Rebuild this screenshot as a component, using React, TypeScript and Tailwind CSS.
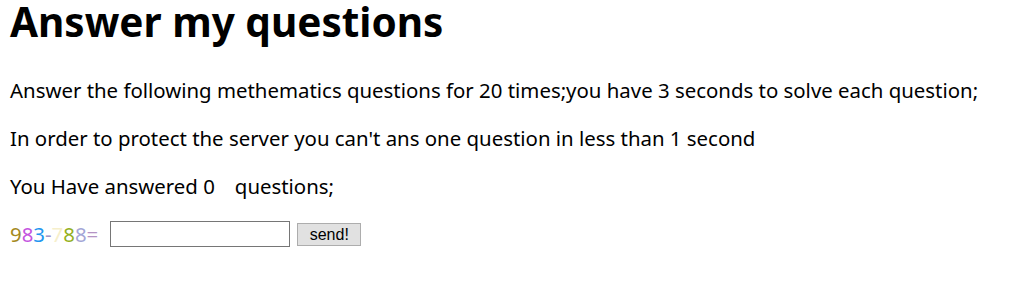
export default function App() {
  const digits: Array<[string, string]> = [
    ['9', 'text-[#a58a1e]'],
    ['8', 'text-[#c455e0]'],
    ['3', 'text-[#2396f0]'],
    ['-', 'text-[#a397c8]'],
    ['7', 'text-[#f6efcb]'],
    ['8', 'text-[#94b01c]'],
    ['8', 'text-[#a4a6d6]'],
    ['=', 'text-[#b493c4]'],
  ]

  return (
    <div className="min-h-screen bg-white pl-[10px] pr-[8px] pt-[2px] font-['Noto_Sans',sans-serif] text-[20.4px] text-black">
      <h1 className="text-[40.5px] font-bold leading-[40px]">Answer my questions</h1>
      <p className="mt-[34px] leading-[28px]">
        Answer the following methematics questions for 20 times;you have 3 seconds to solve each question;
      </p>
      <p className="mt-[20px] leading-[28px]">
        In order to protect the server you can't ans one question in less than 1 second
      </p>
      <p className="mt-[20px] leading-[28px]">
        You Have answered <span>0</span>
        <span className="inline-block w-[20px]" />
        questions;
      </p>
      <div className="mt-[20px] flex items-center">
        <span className="leading-[28px]">
          {digits.map(([d, c], i) => (
            <span key={i} className={c}>
              {d}
            </span>
          ))}
        </span>
        <input
          type="text"
          className="ml-[12px] h-[26px] w-[180px] border border-[#767676] bg-white px-1 text-[14px] outline-none"
        />
        <button className="ml-[7px] mt-[1px] h-[23px] w-[64px] border border-[#adadad] bg-[#e1e1e1] font-['Liberation_Sans',sans-serif] text-[16px] leading-[20px]">
          send!
        </button>
      </div>
    </div>
  )
}
